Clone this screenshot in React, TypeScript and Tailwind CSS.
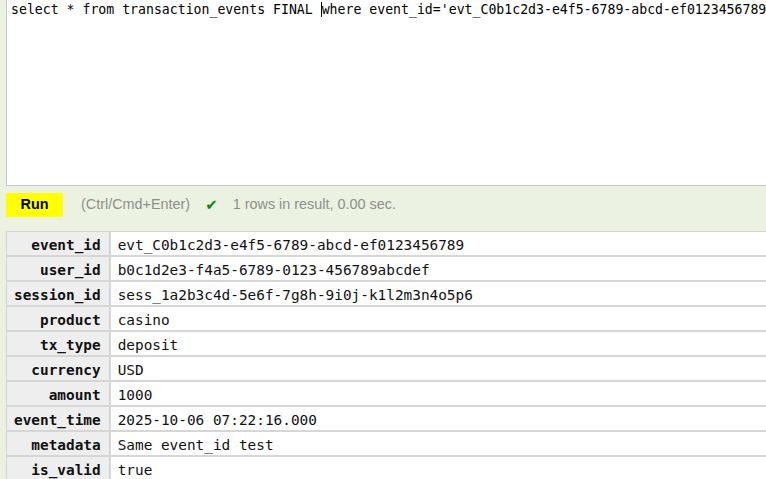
const rows: [string, string][] = [
  ['event_id', 'evt_C0b1c2d3-e4f5-6789-abcd-ef0123456789'],
  ['user_id', 'b0c1d2e3-f4a5-6789-0123-456789abcdef'],
  ['session_id', 'sess_1a2b3c4d-5e6f-7g8h-9i0j-k1l2m3n4o5p6'],
  ['product', 'casino'],
  ['tx_type', 'deposit'],
  ['currency', 'USD'],
  ['amount', '1000'],
  ['event_time', '2025-10-06 07:22:16.000'],
  ['metadata', 'Same event_id test'],
  ['is_valid', 'true'],
]

const mono = "font-['DejaVu_Sans_Mono',monospace]"

export default function App() {
  return (
    <div className="w-[766px] h-[479px] overflow-hidden bg-[#ebf2e1] pl-[6px] font-['Liberation_Sans',Arial,sans-serif]">
      {/* query editor */}
      <div
        className={`w-[820px] h-[186px] bg-white border border-t-0 border-[#c9c9c9] pl-[4px] pt-[2px] text-[13.2px] leading-[16px] text-black whitespace-pre ${mono}`}
      >
        select * from transaction_events FINAL <span className="inline-block w-0 h-[15px] border-l border-black align-[-3px]" />where event_id='evt_C0b1c2d3-e4f5-6789-abcd-ef0123456789'
      </div>

      {/* run bar */}
      <div className="flex items-center mt-[7px] h-[24px] text-[14.4px]">
        <button className="w-[57px] h-[24px] bg-[#ffff00] font-bold text-black">Run</button>
        <span className="ml-[18px] text-[#8f8f8f]">(Ctrl/Cmd+Enter)</span>
        <span className="ml-[15px] text-[#0a8a0a] font-['DejaVu_Sans',sans-serif] text-[15px] leading-none">✔</span>
        <span className="ml-[15px] text-[#8f8f8f]">1 rows in result, 0.00 sec.</span>
      </div>

      {/* result */}
      <table className={`mt-[14px] w-[820px] border-separate border-spacing-0 text-[14.4px] ${mono}`}>
        <tbody>
          {rows.map(([k, v]) => (
            <tr key={k}>
              <th className="w-[103px] h-[25px] border border-[#d6d6d6] bg-[#eeeeee] pl-[7px] pr-[8px] pt-[4px] pb-0 leading-[19px] text-right font-bold text-[#111]">
                {k}
              </th>
              <td className="h-[25px] border border-[#d6d6d6] bg-white pl-[7px] pt-[4px] pb-0 leading-[19px] text-left text-[#111] whitespace-pre">
                {v}
              </td>
            </tr>
          ))}
        </tbody>
      </table>
    </div>
  )
}
